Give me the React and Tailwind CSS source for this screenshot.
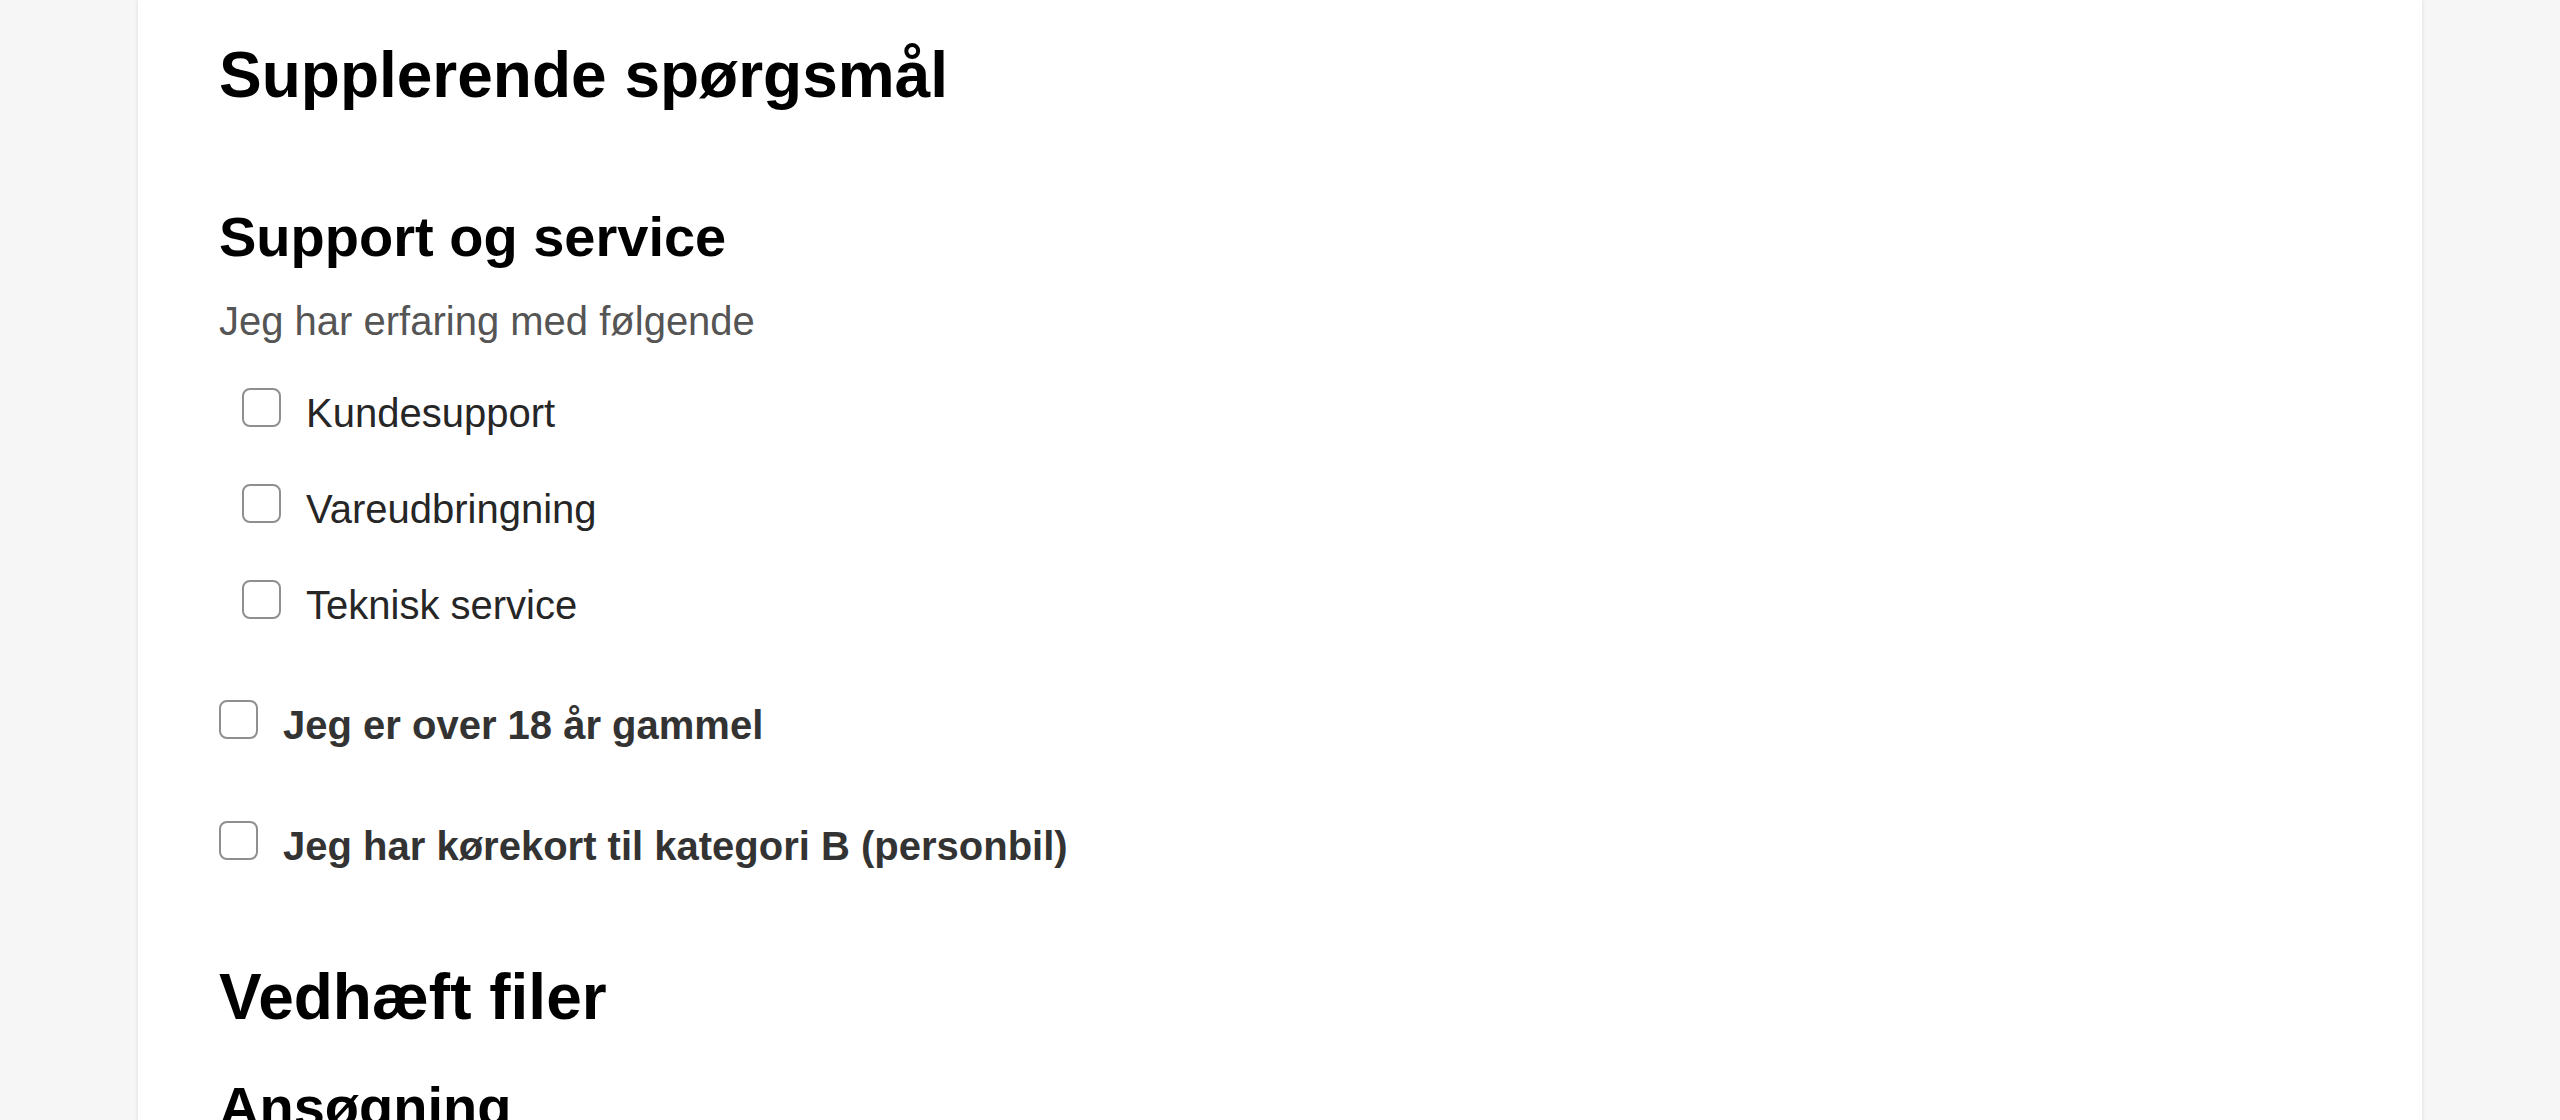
import React from 'react';

const experience = ['Kundesupport', 'Vareudbringning', 'Teknisk service'];

const confirmations = [
  'Jeg er over 18 år gammel',
  'Jeg har kørekort til kategori B (personbil)',
];

// Plain unchecked box, drawn like the native one in the screenshot
const Box = () => (
  <span className="block w-[39px] h-[39px] shrink-0 rounded-[8px] border-2 border-[#8f8f8f] bg-white" />
);

const CheckRow = ({ label, bold }) => (
  <label className="flex items-start gap-[25px] cursor-pointer">
    <Box />
    <span
      className={
        bold
          ? 'text-[40px] leading-[51px] font-bold text-[#333333]'
          : 'text-[40px] leading-[51px] text-[#262626]'
      }
    >
      {label}
    </span>
  </label>
);

export default function App() {
  return (
    <div
      className="h-[1120px] overflow-hidden bg-[#f6f6f6]"
      style={{ fontFamily: '"Liberation Sans", Arial, sans-serif' }}
    >
      <div className="mx-auto w-[2284px] min-h-[1400px] bg-white shadow-[0_0_4px_rgba(0,0,0,0.12)] px-[81px] pt-[37px]">
        {/* Supplerende spørgsmål */}
        <h1 className="text-[64px] leading-[77px] font-bold text-black">
          Supplerende spørgsmål
        </h1>

        <h2 className="mt-[89px] text-[56px] leading-[67px] font-bold text-black">
          Support og service
        </h2>
        <p className="mt-[27px] text-[40px] leading-[48px] text-[#555555]">
          Jeg har erfaring med følgende
        </p>

        <div className="mt-[43px] pl-[23px] flex flex-col gap-[45px]">
          {experience.map((item) => (
            <CheckRow key={item} label={item} />
          ))}
        </div>

        <div className="mt-[69px] flex flex-col gap-[70px]">
          {confirmations.map((item) => (
            <CheckRow key={item} label={item} bold />
          ))}
        </div>

        {/* Vedhæft filer */}
        <h1 className="mt-[87px] text-[64px] leading-[77px] font-bold text-black">
          Vedhæft filer
        </h1>
        <h2 className="mt-[37px] text-[56px] leading-[67px] font-bold text-black">
          Ansøgning
        </h2>
      </div>
    </div>
  );
}
